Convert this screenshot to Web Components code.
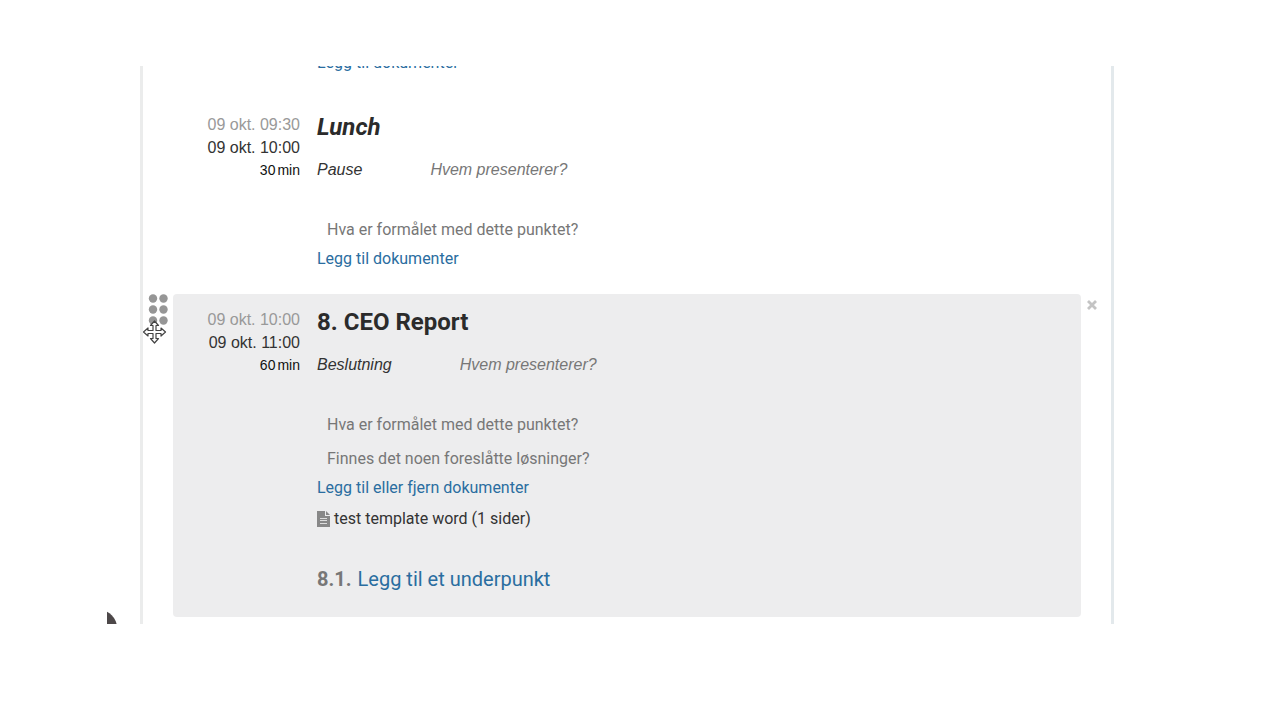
<!DOCTYPE html>
<html lang="no">
<head>
<meta charset="utf-8">
<title>Agenda</title>
<style>
  body { margin: 0; background: #fff; font-family: Roboto, "Liberation Sans", sans-serif; font-size: 16px; color: #333; }
</style>
</head>
<body>
<agenda-view>
  <agenda-previous></agenda-previous>
  <agenda-item start="09 okt. 09:30" end="09 okt. 10:00" minutes="30" heading="Lunch" kind="Pause" pause>
    <agenda-question label="Hva er formålet med dette punktet?"></agenda-question>
    <agenda-link label="Legg til dokumenter"></agenda-link>
  </agenda-item>
  <agenda-item start="09 okt. 10:00" end="09 okt. 11:00" minutes="60" heading="8. CEO Report" kind="Beslutning" active>
    <agenda-question label="Hva er formålet med dette punktet?"></agenda-question>
    <agenda-question label="Finnes det noen foreslåtte løsninger?"></agenda-question>
    <agenda-link label="Legg til eller fjern dokumenter"></agenda-link>
    <agenda-file>test template word (1 sider)</agenda-file>
    <agenda-subpoint number="8.1." label="Legg til et underpunkt"></agenda-subpoint>
  </agenda-item>
</agenda-view>
<script>
class Base extends HTMLElement {
  connectedCallback() {
    if (this.shadowRoot) return;
    this.attachShadow({ mode: "open" }).innerHTML = this.view();
  }
  attr(name) { return this.getAttribute(name) || ""; }
}

customElements.define("agenda-view", class extends Base {
  view() {
    return `<style>
      :host { display: block; padding: 66px 166px 96px 107px; }
      .frame { position: relative; overflow: hidden; padding-left: 33px; }
      .sheet { border-left: 3px solid #ebecec; border-right: 3px solid #e3e9ec; padding-bottom: 7px; display: flow-root; }
      .avatar { position: absolute; left: -26px; bottom: -22px; width: 36px; height: 36px; border-radius: 50%; background: #4d4849; }
    </style>
    <div class="frame"><main class="sheet"><slot></slot></main><div class="avatar"></div></div>`;
  }
});

customElements.define("agenda-previous", class extends Base {
  view() {
    return `<style>:host { display: block; margin-top: -16px; padding: 0 0 25px 174px; }</style>
    <agenda-link label="Legg til dokumenter"></agenda-link>`;
  }
});

customElements.define("agenda-link", class extends Base {
  view() {
    return `<style>
      :host { display: block; line-height: 22px; padding-top: 2px; }
      a { color: #2a6da0; text-decoration: none; }
    </style><a href="#">${this.attr("label")}</a>`;
  }
});

customElements.define("agenda-question", class extends Base {
  view() {
    return `<style>
      :host { display: block; }
      input { box-sizing: border-box; display: block; width: 100%; height: 34px; border: 0; padding: 0 10px; margin: 0; background: none; font: inherit; color: #333; outline: 0; }
      input::placeholder { color: #777; opacity: 1; }
    </style><input type="text" placeholder="${this.attr("label")}" aria-label="${this.attr("label")}">`;
  }
});

customElements.define("agenda-file", class extends Base {
  view() {
    return `<style>
      :host { display: flex; align-items: center; gap: 4px; margin-top: 8px; line-height: 24px; }
      svg { flex: none; }
    </style>
    <svg width="13" height="16" viewBox="0 0 13 16" aria-hidden="true">
      <path fill="#888" d="M0 0h8v5h5v11H0z"/><path fill="#888" d="M9 0l4 4H9z"/>
      <path stroke="#ddd" d="M3 7.5h7M3 9.5h7M3 12.5h7"/>
    </svg><span><slot></slot></span>`;
  }
});

customElements.define("agenda-subpoint", class extends Base {
  view() {
    return `<style>
      :host { display: flex; gap: 6px; margin-top: 34px; font-size: 20px; line-height: 28px; }
      b { color: #777; }
      a { color: #2a6da0; text-decoration: none; }
    </style><b>${this.attr("number")}</b><a href="#">${this.attr("label")}</a>`;
  }
});

customElements.define("drag-handle", class extends Base {
  view() {
    return `<style>
      :host { display: block; position: relative; padding-left: 5px; }
      button { display: block; border: 0; padding: 0; background: none; cursor: move; }
      svg { display: block; }
      .pointer { position: absolute; left: 0; top: 26px; }
    </style>
    <button type="button" aria-label="Flytt punkt"><svg width="20" height="32" viewBox="0 0 20 32">
      <g fill="#969696"><circle cx="5" cy="4.500" r="4.200"/><circle cx="15.500" cy="4.500" r="4.200"/><circle cx="5" cy="15.500" r="4.200"/><circle cx="15.500" cy="15.500" r="4.200"/><circle cx="5" cy="26.500" r="4.200"/><circle cx="15.500" cy="26.500" r="4.200"/></g>
    </svg></button>
    <svg class="pointer" width="25" height="24" viewBox="0 0 25 24" aria-hidden="true">
      <path fill="#fff" stroke="#444" stroke-linejoin="round" stroke-width="1.200" d="M11.500 1l4 4.500h-2.500v5h5v-2.500l4.500 4-4.500 4v-2.500h-5v5h2.500l-4 4.500-4-4.500h2.500v-5h-5v2.500l-4.500-4 4.500-4v2.500h5v-5h-2.500z"/>
    </svg>`;
  }
});

customElements.define("agenda-item", class extends Base {
  view() {
    const active = this.hasAttribute("active");
    return `<style>
      :host { display: grid; grid-template-columns: 30px minmax(0, 1fr) 30px; }
      .card { grid-column: 2; display: grid; grid-template-columns: 127px minmax(0, 1fr); gap: 17px; padding: 14px 16px 24px 0; border-radius: 4px; }
      :host([active]) .card { background: #ededee; }
      .time { text-align: right; line-height: 23px; color: #333; font-family: "Liberation Sans", sans-serif; }
      .time div:first-child { color: #999; }
      .time .length { font-size: 14px; color: #111; display: flex; justify-content: flex-end; gap: 2px; }
      h2 { margin: 0; font-size: 24px; line-height: 28px; font-weight: 700; color: #2b2b2b; }
      :host([pause]) h2 { font-style: italic; }
      .meta { display: flex; gap: 68px; margin: 17px 0 30px; line-height: 24px; font-style: italic; font-family: "Liberation Sans", sans-serif; }
      input { border: 0; padding: 0; margin: 0; background: none; font: inherit; height: 24px; width: 200px; outline: 0; }
      input::placeholder { color: #777; opacity: 1; }
      .close { justify-self: start; align-self: start; margin: 6px 0 0 6px; padding: 0; border: 0; background: none; }
      .close svg { display: block; }
    </style>
    ${active ? "<drag-handle></drag-handle>" : ""}
    <section class="card">
      <div class="time"><div>${this.attr("start")}</div><div>${this.attr("end")}</div>
        <div class="length"><span>${this.attr("minutes")}</span><span>min</span></div></div>
      <div>
        <h2>${this.attr("heading")}</h2>
        <div class="meta"><span>${this.attr("kind")}</span><input type="text" placeholder="Hvem presenterer?" aria-label="Hvem presenterer?"></div>
        <slot></slot>
      </div>
    </section>
    ${active ? `<button class="close" type="button" aria-label="Fjern punkt"><svg width="10" height="10" viewBox="0 0 10 10"><path d="M1 1l8 8M9 1l-8 8" stroke="#c4c4c4" stroke-width="2.800"/></svg></button>` : ""}`;
  }
});
</script>
</body>
</html>
